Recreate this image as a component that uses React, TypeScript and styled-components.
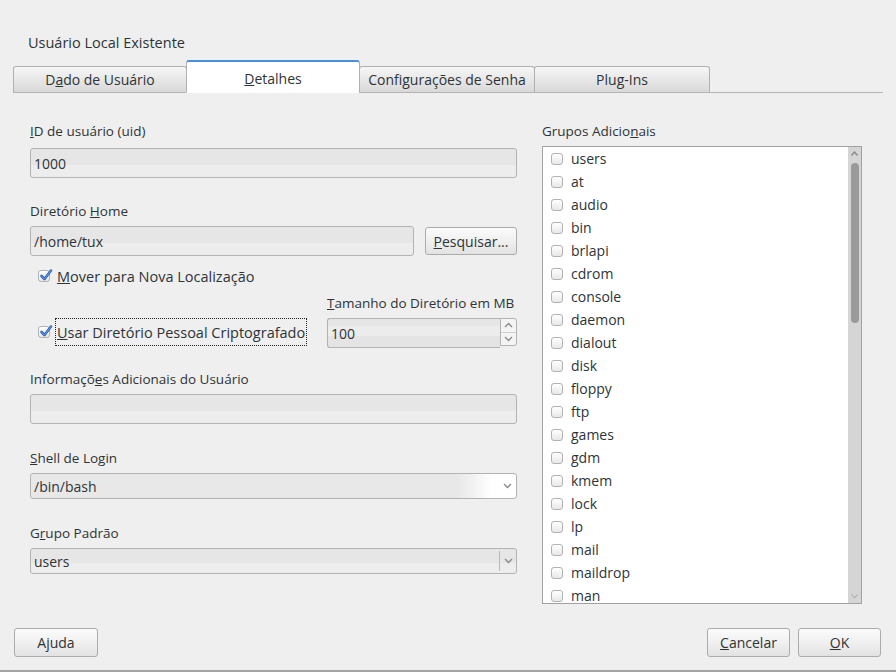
import React from "react";
import styled, { createGlobalStyle } from "styled-components";

const Global = createGlobalStyle`
  html, body { margin: 0; padding: 0; background: #efefef; }
  body { font-family: "Open Sans", "DejaVu Sans", sans-serif; font-size: 13.5px; color: #2e3436; }
  * { box-sizing: border-box; }
`;

const Window = styled.div`
  width: 896px;
  height: 672px;
  background: #efefef;
  border-bottom: 2px solid #a4a4a4;
  display: flex;
  flex-direction: column;
`;

const Title = styled.div`
  height: 18px;
  line-height: 18px;
  font-size: 14.5px;
  margin: 34px 0 7px 28px;
`;

const TabBar = styled.div`
  display: flex;
  align-items: flex-end;
  height: 34px;
  margin: 0 13px;
  border-bottom: 1px solid #b4b4b4;
  font-size: 14px;
`;

const Tab = styled.div<{ $active?: boolean; $w: number }>`
  width: ${(p) => p.$w}px;
  height: ${(p) => (p.$active ? 33 : 27)}px;
  margin-bottom: -1px;
  display: flex;
  align-items: center;
  justify-content: center;
  padding-top: ${(p) => (p.$active ? 3 : 0)}px;
  border: 1px solid #b0b0b0;
  border-bottom: ${(p) => (p.$active ? "1px solid #fff" : "1px solid #b4b4b4")};
  border-radius: 3px 3px 0 0;
  background: ${(p) =>
    p.$active ? "#ffffff" : "linear-gradient(to bottom, #f6f6f6, #d9d9d9)"};
  ${(p) => (p.$active ? "border-top: 2px solid #4a90d9;" : "")}
  & + & { margin-left: -1px; }
`;

const Body = styled.div`
  display: grid;
  grid-template-columns: 487px 320px;
  column-gap: 25px;
  padding-left: 30px;
  height: 521px;
`;

const Column = styled.div`
  display: flex;
  flex-direction: column;
`;

const Label = styled.div<{ $mt?: number; $mb?: number }>`
  height: 18px;
  line-height: 18px;
  margin-top: ${(p) => p.$mt ?? 0}px;
  margin-bottom: ${(p) => p.$mb ?? 6}px;
  white-space: nowrap;
`;

const Entry = styled.div<{ $h?: number }>`
  height: ${(p) => p.$h ?? 30}px;
  border: 1px solid #b3b3b3;
  border-radius: 3px;
  background: linear-gradient(to bottom, #e6e6e6 0, #e6e6e6 58%, #ededed 58%, #ededed 100%);
  display: flex;
  align-items: center;
  padding-left: 3px;
  flex: 1;
  font-size: 14px;
`;

const Row = styled.div<{ $mt?: number; $gap?: number }>`
  display: flex;
  align-items: center;
  margin-top: ${(p) => p.$mt ?? 0}px;
  gap: ${(p) => p.$gap ?? 0}px;
`;

const Button = styled.div<{ $w: number; $h?: number }>`
  width: ${(p) => p.$w}px;
  height: ${(p) => p.$h ?? 29}px;
  border: 1px solid #acacac;
  border-radius: 3px;
  background: linear-gradient(to bottom, #fbfbfb, #f0f0f0 50%, #e2e2e2);
  display: flex;
  align-items: center;
  justify-content: center;
  font-size: 14px;
  flex: none;
`;

const CheckRow = styled.div<{ $mt?: number }>`
  display: flex;
  align-items: center;
  gap: 7px;
  padding-left: 8px;
  margin-top: ${(p) => p.$mt ?? 0}px;
  font-size: 14.5px;
  height: 18px;
`;

const Box = styled.span`
  width: 12px;
  height: 12px;
  border: 1px solid #b2b2b2;
  border-radius: 3px;
  background: linear-gradient(to bottom, #ffffff, #e8e8e8);
  position: relative;
  flex: none;
`;

const Tick = styled.svg`
  position: absolute;
  left: 0px;
  top: -3px;
`;

const Focus = styled.span`
  outline: 1px dotted #222;
  outline-offset: 1px;
  padding: 3px 0 2px;
`;

const EncryptRow = styled.div`
  display: grid;
  grid-template-columns: 297px 190px;
  margin-top: 9px;
  align-items: end;
`;

const SpinWrap = styled.div`
  display: flex;
  flex-direction: column;
`;

const Spin = styled.div`
  display: flex;
  height: 28px;
`;

const SpinEntry = styled(Entry)`
  border-radius: 3px 0 0 3px;
  border-right: none;
  background: linear-gradient(to bottom, #e6e6e6 0, #e6e6e6 25%, #ececec 25%, #ececec 60%, #e4e4e4 60%, #e4e4e4 100%);
`;

const SpinButtons = styled.div`
  width: 17px;
  display: flex;
  flex-direction: column;
  border: 1px solid #b3b3b3;
  border-radius: 0 3px 3px 0;
  background: #f4f4f4;
  & > div + div { border-top: 1px solid #d0d0d0; }
`;

const SpinBtn = styled.div`
  flex: 1;
  display: flex;
  align-items: center;
  justify-content: center;
`;

const Combo = styled.div<{ $fade?: boolean }>`
  height: 26px;
  border: 1px solid #b3b3b3;
  border-radius: 3px;
  display: flex;
  align-items: stretch;
  background: ${(p) =>
    p.$fade
      ? "linear-gradient(to right, #e8e8e8 0, #e8e8e8 88%, #ffffff 95%)"
      : "linear-gradient(to bottom, #e6e6e6 0, #e6e6e6 58%, #ededed 58%)"};
  font-size: 14px;
`;

const ComboText = styled.div`
  flex: 1;
  display: flex;
  align-items: center;
  padding-left: 3px;
`;

const ComboArrow = styled.div<{ $sep?: boolean }>`
  width: 17px;
  display: flex;
  align-items: center;
  justify-content: center;
  border-left: ${(p) => (p.$sep ? "1px solid #b8b8b8" : "none")};
  margin: ${(p) => (p.$sep ? "2px 0" : "0")};
`;

const List = styled.div`
  height: 458px;
  border: 1px solid #a2a2a2;
  background: #ffffff;
  display: flex;
  overflow: hidden;
`;

const Items = styled.div`
  flex: 1;
  display: flex;
  flex-direction: column;
`;

const Item = styled.div`
  height: 23px;
  flex: none;
  display: flex;
  align-items: center;
  gap: 8px;
  padding-left: 8px;
  font-size: 14px;
`;

const ScrollBar = styled.div`
  width: 13px;
  background: #d5d5d5;
  position: relative;
  display: flex;
  flex-direction: column;
  align-items: center;
`;

const Thumb = styled.div`
  width: 8px;
  height: 160px;
  margin-top: 16px;
  border-radius: 4px;
  background: #9a9a9a;
`;

const ArrowMark = styled.svg<{ $bottom?: boolean }>`
  position: absolute;
  left: 3px;
  ${(p) => (p.$bottom ? "bottom: 4px;" : "top: 4px;")}
`;

const Footer = styled.div`
  display: flex;
  align-items: center;
  padding: 0 15px 0 14px;
  margin-top: 14px;
  gap: 8px;
`;

const Spacer = styled.div`
  flex: 1;
`;

const Chevron = ({ up, color = "#888" }: { up?: boolean; color?: string }) => (
  <svg width="9" height="6" viewBox="0 0 9 6">
    <path
      d={up ? "M1 5 L4.5 1.5 L8 5" : "M1 1 L4.5 4.5 L8 1"}
      fill="none"
      stroke={color}
      strokeWidth="1.3"
    />
  </svg>
);

const Check = ({ checked }: { checked?: boolean }) => (
  <Box>
    {checked && (
      <Tick width="14" height="14" viewBox="0 0 14 14">
        <path d="M2.5 8 L5.5 11 L12 2.5" fill="none" stroke="#2a62b8" strokeWidth="2.6" strokeLinecap="round" strokeLinejoin="round" />
        <path d="M2.5 8 L5.5 11 L12 2.5" fill="none" stroke="#6aa0e6" strokeWidth="1" strokeLinecap="round" strokeLinejoin="round" />
      </Tick>
    )}
  </Box>
);

const groups = [
  "users", "at", "audio", "bin", "brlapi", "cdrom", "console", "daemon", "dialout", "disk",
  "floppy", "ftp", "games", "gdm", "kmem", "lock", "lp", "mail", "maildrop", "man",
];

export default function App() {
  return (
    <>
      <Global />
      <Window>
        <Title>Usuário Local Existente</Title>
        <TabBar>
          <Tab $w={174}>D<u>a</u>do de Usuário</Tab>
          <Tab $w={174} $active><u>D</u>etalhes</Tab>
          <Tab $w={176}>Configurações de Senha</Tab>
          <Tab $w={176}>Plu<u>g</u>-Ins</Tab>
        </TabBar>
        <Body>
          <Column>
            <Label $mt={29} $mb={8}><u>I</u>D de usuário (uid)</Label>
            <Row><Entry>1000</Entry></Row>
            <Label $mt={24}>Diretório <u>H</u>ome</Label>
            <Row $gap={11}>
              <Entry>/home/tux</Entry>
              <Button $w={92} $h={28}><u>P</u>esquisar...</Button>
            </Row>
            <CheckRow $mt={11}>
              <Check checked />
              <span><u>M</u>over para Nova Localização</span>
            </CheckRow>
            <EncryptRow>
              <CheckRow style={{ marginBottom: 5 }}>
                <Check checked />
                <Focus><u>U</u>sar Diretório Pessoal Criptografado</Focus>
              </CheckRow>
              <SpinWrap>
                <Label><u>T</u>amanho do Diretório em MB</Label>
                <Spin>
                  <SpinEntry>100</SpinEntry>
                  <SpinButtons>
                    <SpinBtn><Chevron up /></SpinBtn>
                    <SpinBtn><Chevron /></SpinBtn>
                  </SpinButtons>
                </Spin>
              </SpinWrap>
            </EncryptRow>
            <Label $mt={24}>Informaçõ<u>e</u>s Adicionais do Usuário</Label>
            <Row><Entry /></Row>
            <Label $mt={25}><u>S</u>hell de Login</Label>
            <Combo $fade>
              <ComboText>/bin/bash</ComboText>
              <ComboArrow><Chevron /></ComboArrow>
            </Combo>
            <Label $mt={25}>G<u>r</u>upo Padrão</Label>
            <Combo>
              <ComboText>users</ComboText>
              <ComboArrow $sep><Chevron /></ComboArrow>
            </Combo>
          </Column>
          <Column>
            <Label $mt={29} $mb={6}>Grupos Adicio<u>n</u>ais</Label>
            <List>
              <Items>
                {groups.map((g) => (
                  <Item key={g}>
                    <Check />
                    <span>{g}</span>
                  </Item>
                ))}
              </Items>
              <ScrollBar>
                <ArrowMark width="7" height="5" viewBox="0 0 7 5">
                  <path d="M0.5 4.5 L3.5 1 L6.5 4.5" fill="none" stroke="#8a8a8a" strokeWidth="1.4" />
                </ArrowMark>
                <Thumb />
                <ArrowMark $bottom width="7" height="5" viewBox="0 0 7 5">
                  <path d="M0.5 0.5 L3.5 4 L6.5 0.5" fill="none" stroke="#a0a0a0" strokeWidth="1" />
                </ArrowMark>
              </ScrollBar>
            </List>
          </Column>
        </Body>
        <Footer>
          <Button $w={84}>Ajuda</Button>
          <Spacer />
          <Button $w={83}><u>C</u>ancelar</Button>
          <Button $w={83}><u>O</u>K</Button>
        </Footer>
      </Window>
    </>
  );
}
